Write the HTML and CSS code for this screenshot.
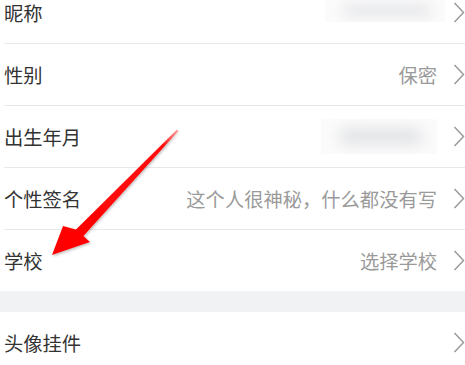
FILE: index.html
```html
<!DOCTYPE html>
<html lang="zh">
<head>
<meta charset="utf-8">
<link rel="stylesheet" href="styles.css">
</head>
<body>
<div class="page">
  <div class="group">
    <div class="row">
      <span class="label">昵称</span>
      <span class="blurbox wide"><span class="blob"></span></span>
      <svg class="chev" viewBox="0 0 12 21" width="12" height="21"><path d="M1.5 1 L10.5 10.5 L1.5 20" /></svg>
    </div>
    <div class="row">
      <span class="label">性别</span>
      <span class="value">保密</span>
      <svg class="chev" viewBox="0 0 12 21" width="12" height="21"><path d="M1.5 1 L10.5 10.5 L1.5 20" /></svg>
    </div>
    <div class="row">
      <span class="label">出生年月</span>
      <span class="blurbox tall"><span class="blob"></span></span>
      <svg class="chev" viewBox="0 0 12 21" width="12" height="21"><path d="M1.5 1 L10.5 10.5 L1.5 20" /></svg>
    </div>
    <div class="row">
      <span class="label">个性签名</span>
      <span class="value">这个人很神秘，什么都没有写</span>
      <svg class="chev" viewBox="0 0 12 21" width="12" height="21"><path d="M1.5 1 L10.5 10.5 L1.5 20" /></svg>
    </div>
    <div class="row">
      <span class="label">学校</span>
      <span class="value">选择学校</span>
      <svg class="chev" viewBox="0 0 12 21" width="12" height="21"><path d="M1.5 1 L10.5 10.5 L1.5 20" /></svg>
    </div>
  </div>
  <div class="gap"></div>
  <div class="group">
    <div class="row">
      <span class="label">头像挂件</span>
      <span class="value"></span>
      <svg class="chev" viewBox="0 0 12 21" width="12" height="21"><path d="M1.5 1 L10.5 10.5 L1.5 20" /></svg>
    </div>
  </div>
</div>
<svg class="arrow" width="465" height="365" viewBox="0 0 465 365">
  <defs>
    <filter id="sh" x="-20%" y="-20%" width="140%" height="140%">
      <feDropShadow dx="1" dy="1.5" stdDeviation="1" flood-color="#555" flood-opacity="0.35"/>
    </filter>
    <linearGradient id="fade" x1="178" y1="130" x2="52" y2="255" gradientUnits="userSpaceOnUse">
      <stop offset="0" stop-color="#ff2a2a" stop-opacity="0.4"/>
      <stop offset="0.12" stop-color="#ff0f0f"/>
      <stop offset="1" stop-color="#ff0000"/>
    </linearGradient>
  </defs>
  <polygon filter="url(#sh)" fill="url(#fade)" points="177,129.5 76,229.5 63,226 52,255 90,242 83.5,236 178.5,131"/>
</svg>
</body>
</html>
```
FILE: styles.css
```css
html, body {
  margin: 0;
  padding: 0;
  background: #ffffff;
  overflow: hidden;
}
body {
  width: 465px;
  height: 365px;
  position: relative;
  font-family: "Noto Sans CJK SC", "Noto Sans", sans-serif;
}
.page {
  margin-top: -18px;
}
.group {
  background: #ffffff;
}
.row {
  display: flex;
  align-items: center;
  height: 61px;
  margin-left: 4px;
  padding-right: 0;
  border-bottom: 1px solid #e8e8e8;
}
.group .row:last-child {
  border-bottom: none;
}
.label {
  font-size: 19.3px;
  color: #333333;
  flex: 1;
}
.value {
  font-size: 19.3px;
  color: #9a9a9a;
  margin-right: 16px;
}
.chev {
  flex: none;
}
.chev path {
  fill: none;
  stroke: #9b9b9b;
  stroke-width: 1.5;
}
.gap {
  height: 21px;
  background: #f1f2f4;
}
.blurbox {
  display: block;
  position: relative;
  overflow: hidden;
  background: #fbfbfb;
}
.blurbox.wide {
  width: 120px;
  height: 22px;
  margin-right: 8px;
  transform: translateY(-2px);
}
.blurbox.tall {
  width: 116px;
  height: 35px;
  margin-right: 16px;
}
.blob {
  position: absolute;
  left: 18px;
  right: 14px;
  top: 25%;
  bottom: 25%;
  background: #e3e4e7;
  filter: blur(7px);
  border-radius: 8px;
}
.arrow {
  position: absolute;
  left: 0;
  top: 0;
  pointer-events: none;
}
```
